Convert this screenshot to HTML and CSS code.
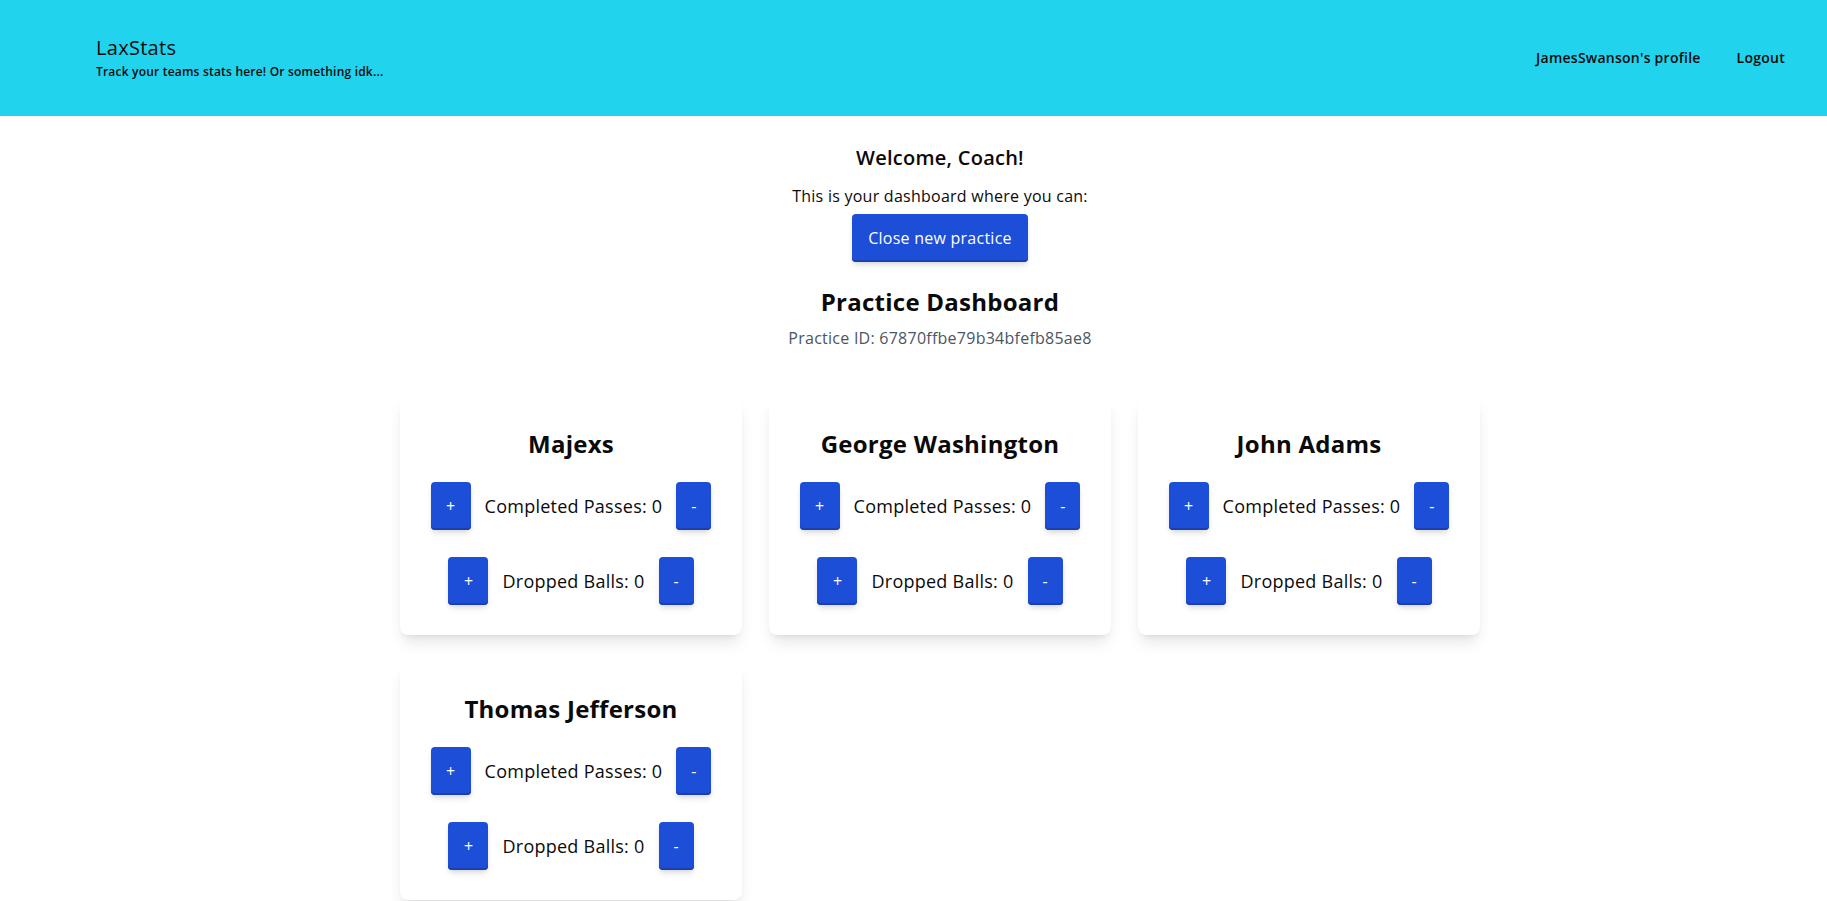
FILE: index.html
```html
<!DOCTYPE html>
<html lang="en">
<head>
<meta charset="utf-8">
<title>LaxStats</title>
<link rel="stylesheet" href="styles.css">
</head>
<body>
<header class="topbar">
  <div class="brand">
    <div class="brand-title">LaxStats</div>
    <div class="brand-sub">Track your teams stats here! Or something idk...</div>
  </div>
  <nav class="nav">
    <a class="nav-link">JamesSwanson's profile</a>
    <a class="nav-link">Logout</a>
  </nav>
</header>
<main class="main">
  <section class="welcome">
    <h2 class="welcome-title">Welcome, Coach!</h2>
    <p class="welcome-text">This is your dashboard where you can:</p>
    <button class="btn btn-main">Close new practice</button>
  </section>
  <section class="dashboard">
    <h1 class="dash-title">Practice Dashboard</h1>
    <p class="dash-id">Practice ID: 67870ffbe79b34bfefb85ae8</p>
    <div class="grid">
      <div class="card">
        <h3 class="card-name">Majexs</h3>
        <div class="stat-row"><button class="btn btn-sm btn-inc">+</button><span class="stat-label">Completed Passes: 0</span><button class="btn btn-sm btn-dec">-</button></div>
        <div class="stat-row"><button class="btn btn-sm btn-inc">+</button><span class="stat-label">Dropped Balls: 0</span><button class="btn btn-sm btn-dec">-</button></div>
      </div>
      <div class="card">
        <h3 class="card-name">George Washington</h3>
        <div class="stat-row"><button class="btn btn-sm btn-inc">+</button><span class="stat-label">Completed Passes: 0</span><button class="btn btn-sm btn-dec">-</button></div>
        <div class="stat-row"><button class="btn btn-sm btn-inc">+</button><span class="stat-label">Dropped Balls: 0</span><button class="btn btn-sm btn-dec">-</button></div>
      </div>
      <div class="card">
        <h3 class="card-name">John Adams</h3>
        <div class="stat-row"><button class="btn btn-sm btn-inc">+</button><span class="stat-label">Completed Passes: 0</span><button class="btn btn-sm btn-dec">-</button></div>
        <div class="stat-row"><button class="btn btn-sm btn-inc">+</button><span class="stat-label">Dropped Balls: 0</span><button class="btn btn-sm btn-dec">-</button></div>
      </div>
      <div class="card">
        <h3 class="card-name">Thomas Jefferson</h3>
        <div class="stat-row"><button class="btn btn-sm btn-inc">+</button><span class="stat-label">Completed Passes: 0</span><button class="btn btn-sm btn-dec">-</button></div>
        <div class="stat-row"><button class="btn btn-sm btn-inc">+</button><span class="stat-label">Dropped Balls: 0</span><button class="btn btn-sm btn-dec">-</button></div>
      </div>
    </div>
  </section>
</main>
</body>
</html>
```
FILE: styles.css
```css
* { box-sizing: border-box; }
body {
  margin: 0;
  font-family: "Open Sans", "Noto Sans", sans-serif;
  letter-spacing: 0.25px;
  color: #0a0a0a;
  background: #ffffff;
}
.topbar {
  height: 116px;
  background: #22d3ee;
  display: flex;
  align-items: center;
  justify-content: space-between;
  padding: 0 42px 2px 96px;
}
.brand-title {
  font-size: 20px;
  line-height: 28px;
  font-weight: 500;
  letter-spacing: 0.3px;
}
.brand-sub {
  margin-top: 2px;
  font-size: 12px;
  line-height: 16px;
  font-weight: 600;
  letter-spacing: 0.2px;
}
.nav {
  display: flex;
  gap: 36px;
}
.nav-link {
  font-size: 14px;
  font-weight: 600;
  color: #0a0a0a;
  text-decoration: none;
}
.main {
  padding: 0 0 40px 53px;
  display: flex;
  flex-direction: column;
  align-items: center;
}
.welcome {
  display: flex;
  flex-direction: column;
  align-items: center;
  padding-top: 28px;
}
.welcome-title {
  margin: 0 0 12px;
  font-size: 20px;
  line-height: 28px;
  font-weight: 600;
}
.welcome-text {
  margin: 0;
  font-size: 16px;
  line-height: 24px;
}
.btn {
  font-family: inherit;
  letter-spacing: inherit;
  background: #1d4ed8;
  color: #ffffff;
  border: none;
  border-radius: 4px;
  box-shadow: inset 0 -2px 0 #1e40af, 0 4px 6px -1px rgba(0,0,0,0.12), 0 2px 4px -2px rgba(0,0,0,0.1);
  cursor: pointer;
}
.btn-main {
  margin-top: 6px;
  padding: 12px 16px;
  font-size: 16px;
  line-height: 24px;
}
.dashboard {
  display: flex;
  flex-direction: column;
  align-items: center;
}
.dash-title {
  margin: 24px 0 8px;
  font-size: 24px;
  line-height: 32px;
  font-weight: 700;
}
.dash-id {
  margin: 0;
  font-size: 16px;
  line-height: 24px;
  color: #4b5563;
}
.grid {
  margin-top: 47px;
  width: 1080px;
  display: grid;
  grid-template-columns: repeat(3, 1fr);
  gap: 27px;
}
.card {
  background: #ffffff;
  border-radius: 8px;
  box-shadow: 0 10px 15px -3px rgba(0,0,0,0.1), 0 4px 6px -4px rgba(0,0,0,0.1);
  padding: 31px 16px 30px;
  display: flex;
  flex-direction: column;
  align-items: center;
  gap: 27px;
}
.card-name {
  margin: 0 0 -5px;
  font-size: 24px;
  line-height: 32px;
  font-weight: 700;
}
.stat-row {
  display: flex;
  align-items: center;
  justify-content: center;
  gap: 14px;
}
.stat-label {
  font-size: 18px;
  line-height: 28px;
}
.btn-sm {
  height: 48px;
  padding: 0;
  font-size: 16px;
  line-height: 24px;
  letter-spacing: 0;
  text-align: center;
}
.btn-inc {
  width: 40px;
}
.btn-dec {
  width: 35px;
}
```
